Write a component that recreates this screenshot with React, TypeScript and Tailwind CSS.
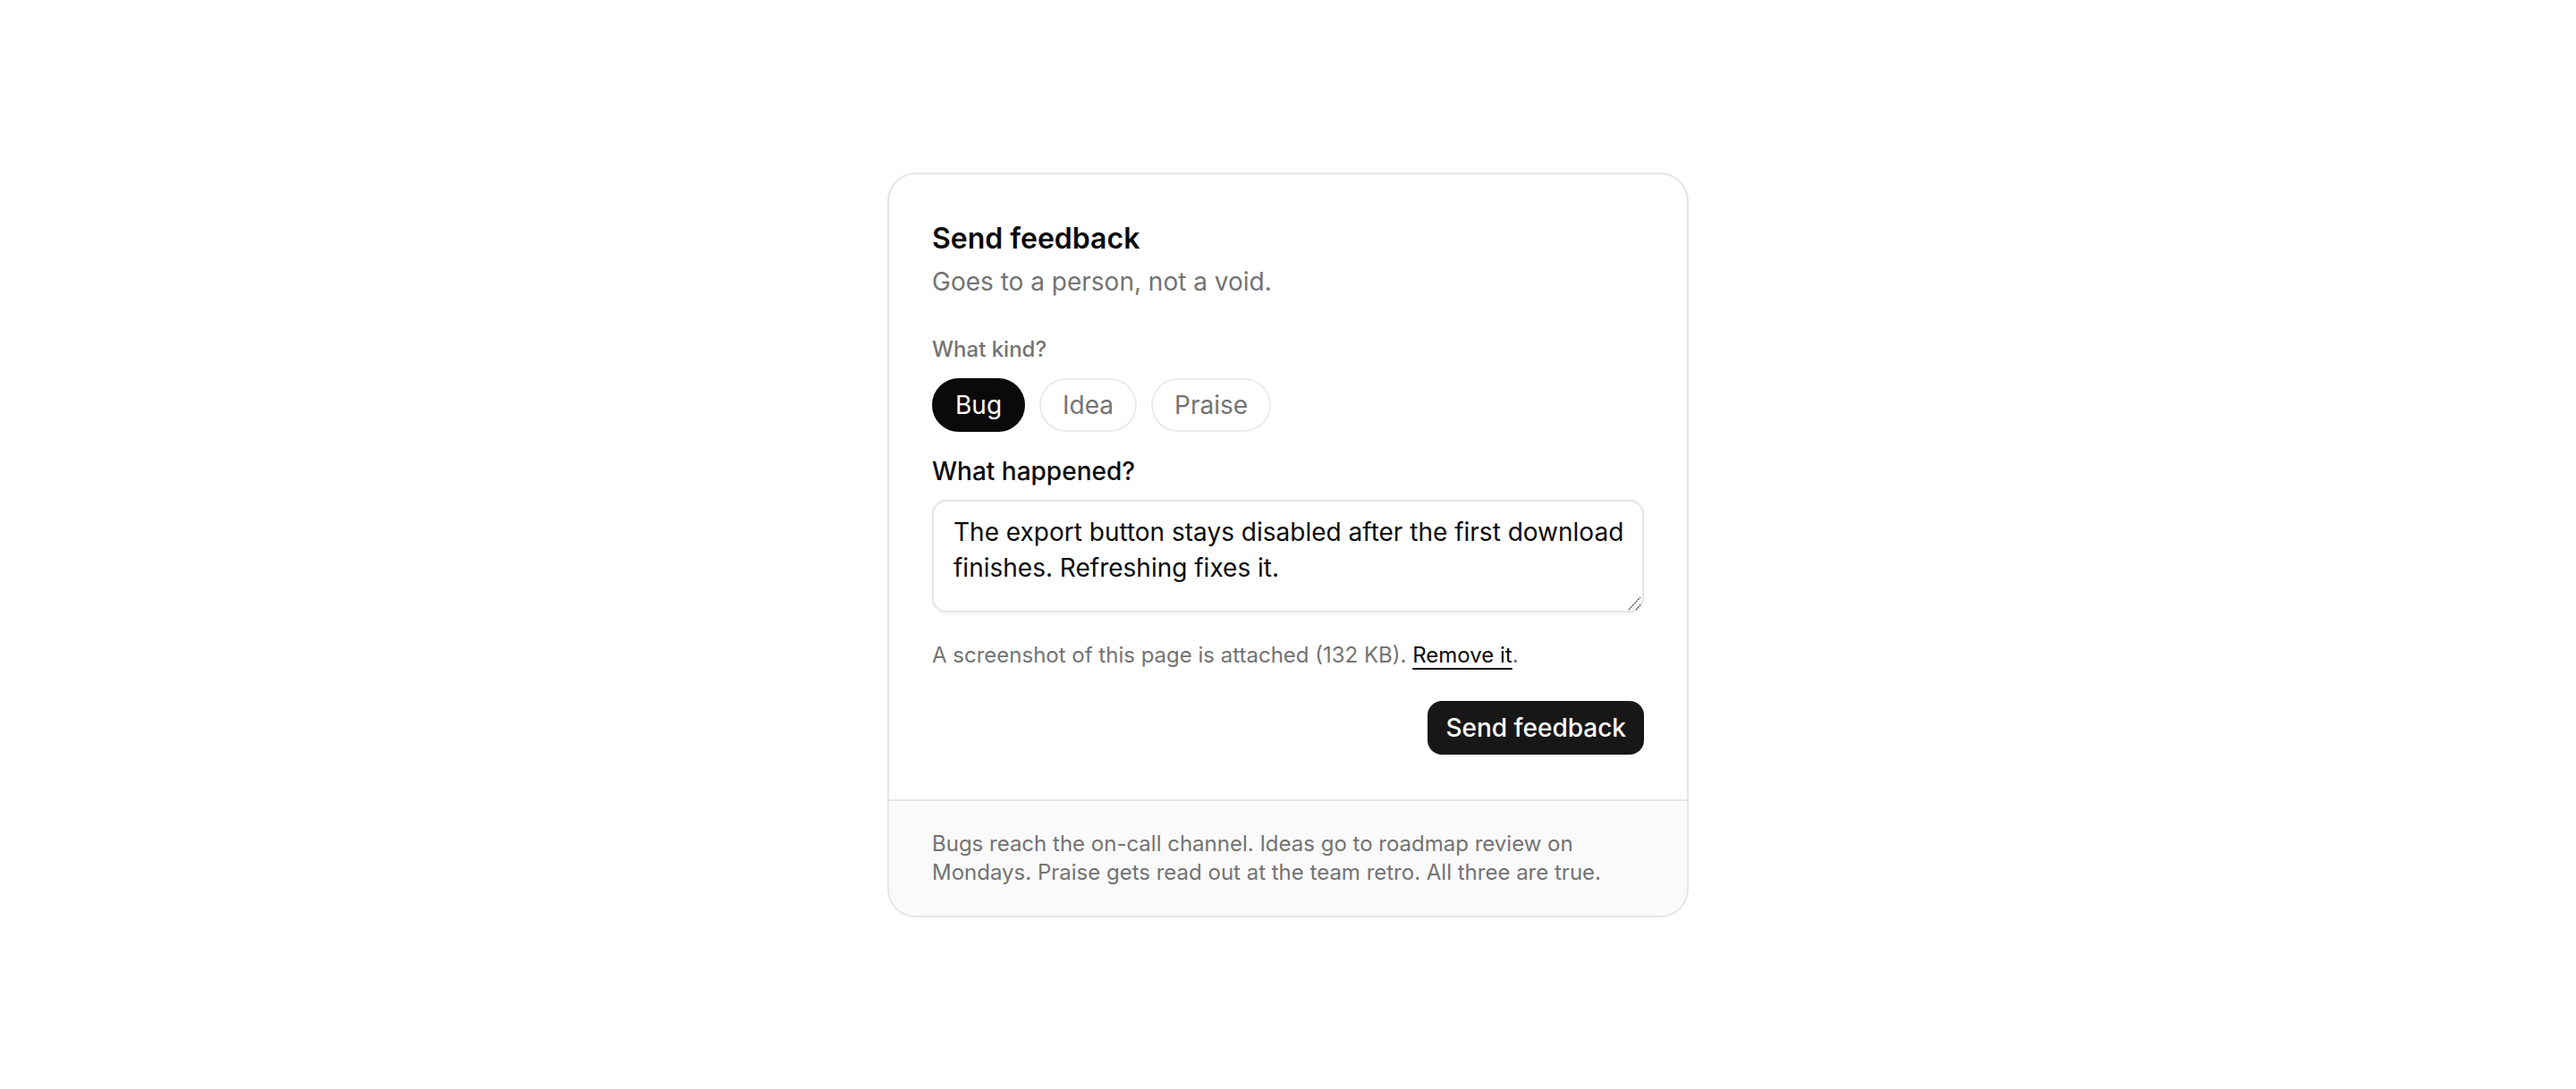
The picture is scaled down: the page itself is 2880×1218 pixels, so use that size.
import React, { useState } from "react";

export default function App() {
  const [kind, setKind] = useState("Bug");
  const kinds = ["Bug", "Idea", "Praise"];
  return (
    <div className="min-h-screen flex items-center justify-center bg-white font-['Inter','Noto_Sans',sans-serif]">
      <div className="w-[896px] rounded-[32px] border-2 border-neutral-200 bg-white overflow-hidden">
        <div className="px-12 pt-12 pb-[50px]">
          <h2 className="text-[32px] leading-[48px] font-semibold text-neutral-950">Send feedback</h2>
          <p className="mt-1 text-[28px] leading-[40px] text-neutral-500">Goes to a person, not a void.</p>
          <div className="mt-10 text-[24px] leading-[32px] font-medium text-neutral-500">What kind?</div>
          <div className="mt-4 flex gap-4">
            {kinds.map((k) => (
              <button
                key={k}
                onClick={() => setKind(k)}
                className={
                  k === kind
                    ? "h-[60px] px-6 rounded-full border-2 border-neutral-950 bg-neutral-950 text-white text-[28px] leading-[40px]"
                    : "h-[60px] px-6 rounded-full border-2 border-[#ebebeb] bg-white text-neutral-500 text-[28px] leading-[40px]"
                }
              >
                {k}
              </button>
            ))}
          </div>
          <label className="block mt-6 text-[28px] leading-[40px] font-medium text-neutral-950">What happened?</label>
          <div className="relative mt-3">
            <textarea
              className="block w-full h-[126px] resize-none rounded-2xl border-2 border-neutral-200 pl-[22px] pr-[10px] py-[14px] text-[28px] leading-[40px] text-neutral-950 shadow-[0_2px_4px_rgba(0,0,0,0.05)] outline-none"
              defaultValue="The export button stays disabled after the first download finishes. Refreshing fixes it."
            />
            <svg
              className="absolute right-[2px] bottom-[2px] w-[16px] h-[16px] pointer-events-none"
              viewBox="0 0 16 16"
              fill="none"
              stroke="#5f5f5f"
              strokeWidth="1.6"
              strokeDasharray="2 1"
            >
              <line x1="1" y1="15" x2="14" y2="1" />
              <line x1="9" y1="15" x2="14" y2="9" />
            </svg>
          </div>
          <p className="mt-8 text-[24px] leading-[32px] text-neutral-500">
            A screenshot of this page is attached (132 KB).{" "}
            <button className="text-neutral-950 underline decoration-2 underline-offset-[6px]">Remove it</button>.
          </p>
          <div className="mt-[35px] flex justify-end">
            <button className="h-[60px] px-5 rounded-2xl bg-neutral-900 text-white text-[28px] leading-[40px] font-medium">
              Send feedback
            </button>
          </div>
        </div>
        <div className="border-t-2 border-neutral-200 bg-neutral-50 px-12 py-8 text-[24px] leading-[32px] text-neutral-500">
          Bugs reach the on-call channel. Ideas go to roadmap review on Mondays. Praise gets read out at the team retro. All three are true.
        </div>
      </div>
    </div>
  );
}
